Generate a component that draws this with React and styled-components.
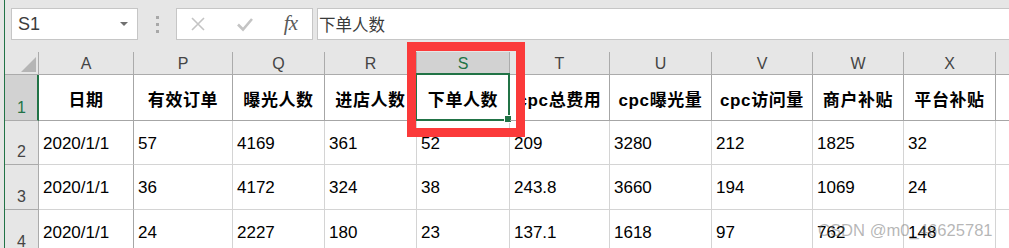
import React from 'react'
import styled, { createGlobalStyle, css } from 'styled-components'

const columns = [
  { key: 'A', title: '日期', width: 95 },
  { key: 'P', title: '有效订单', width: 99 },
  { key: 'Q', title: '曝光人数', width: 92 },
  { key: 'R', title: '进店人数', width: 92 },
  { key: 'S', title: '下单人数', width: 93 },
  { key: 'T', title: 'cpc总费用', width: 100 },
  { key: 'U', title: 'cpc曝光量', width: 102 },
  { key: 'V', title: 'cpc访问量', width: 101 },
  { key: 'W', title: '商户补贴', width: 91 },
  { key: 'X', title: '平台补贴', width: 92 },
]

const rows = [
  ['2020/1/1', '57', '4169', '361', '52', '209', '3280', '212', '1825', '32'],
  ['2020/1/1', '36', '4172', '324', '38', '243.8', '3660', '194', '1069', '24'],
  ['2020/1/1', '24', '2227', '180', '23', '137.1', '1618', '97', '762', '148'],
]

const rowHeights = [44, 45, 45]

const App = () => {
  return (
    <Frame>
      <GlobalStyle />
      <Window>
        <Toolbar>
          <NameBox>
            S1
            <Caret />
          </NameBox>
          <Dots>
            <span />
            <span />
            <span />
          </Dots>
          <IconBox>
            <svg width='16' height='16' viewBox='0 0 16 16'>
              <path d='M2 2 L14 14 M14 2 L2 14' stroke='#c4c4c4' strokeWidth='1.6' fill='none' />
            </svg>
            <svg width='18' height='16' viewBox='0 0 18 16'>
              <path d='M2 8.5 L7 13.5 L16 3' stroke='#c4c4c4' strokeWidth='2.6' fill='none' />
            </svg>
            <Fx>fx</Fx>
          </IconBox>
          <FormulaInput>下单人数</FormulaInput>
        </Toolbar>

        <Sheet>
          <Corner>
            <svg width='15' height='15' viewBox='0 0 15 15'>
              <path d='M15 0 L15 15 L0 15 Z' fill='#b5b5b5' />
            </svg>
          </Corner>
          {columns.map(c => (
            <ColHead key={c.key} $active={c.key === 'S'}>{c.key}</ColHead>
          ))}
          <ColHead $last />

          <RowHead $active>1</RowHead>
          {columns.map(c => (
            <TitleCell key={c.key}>
              {c.title}
              {c.key === 'S' && (
                <Selection>
                  <Handle />
                </Selection>
              )}
            </TitleCell>
          ))}
          <TitleCell $last />

          {rows.map((r, i) => (
            <React.Fragment key={i}>
              <RowHead>{i + 2}</RowHead>
              {r.map((v, j) => (
                <DataCell key={j} $first={j === 0}>{v}</DataCell>
              ))}
              <DataCell $last />
            </React.Fragment>
          ))}
        </Sheet>
      </Window>

      <Highlight />
      <Watermark>CSDN @m0_46625781</Watermark>
    </Frame>
  )
}

const GlobalStyle = createGlobalStyle`
  body {
    margin: 0;
    background: #e6e6e6;
    font-family: "Liberation Sans", "Noto Sans CJK SC", sans-serif;
  }
`

const Frame = styled('div')`
  position: relative;
  display: flex;
  height: 248px;
  overflow: hidden;
  padding-left: 4px;
  background: #e6e6e6;
`

const Window = styled('div')`
  flex: 1;
  display: flex;
  flex-direction: column;
  border-left: 1px solid #217346;
  min-width: 0;
`

const Toolbar = styled('div')`
  height: 52px;
  flex: none;
  display: flex;
  align-items: flex-start;
  padding: 8px 0 0 6px;
  box-sizing: border-box;
`

const boxBase = css`
  height: 32px;
  box-sizing: border-box;
  background: #fff;
  border: 1px solid #c6c6c6;
  display: flex;
  align-items: center;
`

const NameBox = styled('div')`
  ${boxBase};
  width: 127px;
  padding: 0 6px;
  justify-content: space-between;
  font-size: 18px;
  color: #3c3c3c;
`

const Caret = styled('span')`
  width: 0;
  height: 0;
  margin-right: 3px;
  border-left: 4px solid transparent;
  border-right: 4px solid transparent;
  border-top: 4px solid #707070;
`

const Dots = styled('div')`
  width: 38px;
  height: 32px;
  display: flex;
  flex-direction: column;
  align-items: center;
  justify-content: center;
  gap: 4px;
  span {
    width: 3px;
    height: 3px;
    background: #a8a8a8;
  }
`

const IconBox = styled('div')`
  ${boxBase};
  width: 137px;
  padding: 0 15px 0 13px;
  justify-content: space-between;
`

const Fx = styled('span')`
  font-family: "Liberation Serif", serif;
  font-style: italic;
  font-size: 21px;
  color: #5a5a5a;
  letter-spacing: -1px;
  margin-top: -2px;
`

const FormulaInput = styled('div')`
  ${boxBase};
  flex: 1;
  margin-left: 4px;
  border-right: none;
  padding-left: 1px;
  font-family: "Noto Sans CJK SC", sans-serif;
  font-size: 16.5px;
  color: #3a3a3a;
`

const Sheet = styled('div')`
  display: grid;
  grid-template-columns: 34px ${columns.map(c => c.width + 'px').join(' ')} 1fr;
  grid-template-rows: 23px 46px ${rowHeights.map(h => h + 'px').join(' ')};
  background: #fff;
`

const Corner = styled('div')`
  background: #e6e6e6;
  border-right: 1px solid #ababab;
  border-bottom: 1px solid #ababab;
  display: flex;
  align-items: flex-end;
  justify-content: flex-end;
  padding: 0 2px 2px 0;
`

const ColHead = styled('div')`
  background: ${p => (p.$active ? '#d2d2d2' : '#e6e6e6')};
  color: ${p => (p.$active ? '#217346' : '#444')};
  border-right: ${p => (p.$last ? 'none' : '1px solid #ababab')};
  border-bottom: 1px solid #ababab;
  font-size: 16px;
  display: flex;
  align-items: center;
  justify-content: center;
  padding-top: 1px;
`

const RowHead = styled('div')`
  background: ${p => (p.$active ? '#d2d2d2' : '#e6e6e6')};
  color: ${p => (p.$active ? '#217346' : '#444')};
  border-right: ${p => (p.$active ? '2px solid #217346' : '1px solid #ababab')};
  border-bottom: 1px solid #ababab;
  font-size: 16px;
  display: flex;
  align-items: flex-end;
  justify-content: center;
  padding-bottom: 3px;
  padding-left: ${p => (p.$active ? '1px' : '0')};
`

const TitleCell = styled('div')`
  position: relative;
  border-right: ${p => (p.$last ? 'none' : '1px solid #a6a6a6')};
  border-bottom: 1px solid #a6a6a6;
  display: flex;
  align-items: center;
  justify-content: center;
  white-space: nowrap;
  font-family: "Liberation Sans", "Noto Sans CJK SC", sans-serif;
  font-weight: bold;
  font-size: 17px;
  letter-spacing: 0.6px;
  color: #000;
  padding-top: 1px;
`

const Selection = styled('div')`
  position: absolute;
  left: -2px;
  top: -2px;
  width: 95px;
  height: 48px;
  box-sizing: border-box;
  border: 2px solid #217346;
`

const Handle = styled('div')`
  position: absolute;
  right: -4px;
  bottom: -4px;
  width: 6px;
  height: 6px;
  background: #217346;
  border: 1px solid #fff;
  box-sizing: content-box;
`

const DataCell = styled('div')`
  border-right: ${p => (p.$last ? 'none' : p.$first ? '1px solid #a6a6a6' : '1px solid #d4d4d4')};
  border-bottom: 1px solid #d4d4d4;
  display: flex;
  align-items: center;
  padding: 2px 0 0 4px;
  font-size: 17px;
  color: #000;
  white-space: nowrap;
`

const Highlight = styled('div')`
  position: absolute;
  left: 407px;
  top: 42px;
  width: 118px;
  height: 95px;
  box-sizing: border-box;
  border: 9px solid #fb3a3a;
  pointer-events: none;
`

const Watermark = styled('div')`
  position: absolute;
  left: 818px;
  top: 221px;
  font-size: 16.6px;
  color: rgba(110, 110, 110, 0.5);
  white-space: nowrap;
  pointer-events: none;
`

export default App
